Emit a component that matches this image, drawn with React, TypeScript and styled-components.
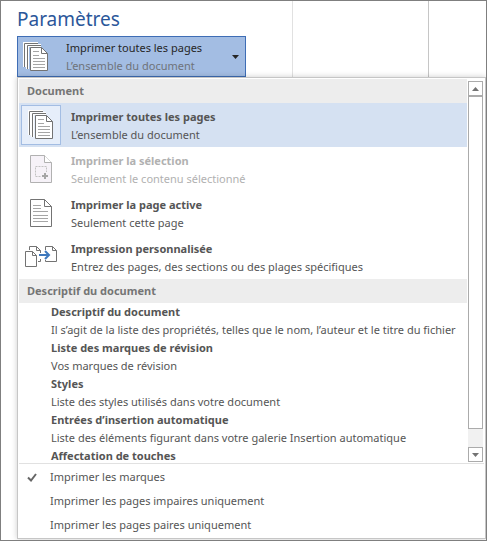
import React, { useState } from 'react';
import styled, { createGlobalStyle } from 'styled-components';

const GlobalStyle = createGlobalStyle`
  *, *::before, *::after { box-sizing: border-box; }
  body {
    margin: 0;
    background: #fff;
    font-family: "Noto Sans", "Open Sans", sans-serif;
    font-size: 11px;
    line-height: 18px;
    color: #555;
  }
  button { font: inherit; color: inherit; text-align: left; cursor: pointer; }
`;

const Frame = styled.main`
  border: 1px solid #7f7f7f;
  padding-bottom: 1px;
  overflow: hidden;
`;

const TopArea = styled.div`
  display: grid;
  grid-template-columns: 292px 136px 1fr;
`;

const SettingsPane = styled.section`
  padding: 5px 0 0 16px;
  border-right: 1px solid #e1e1e1;
`;

const PreviewPane = styled.div`
  border-right: 1px solid #c6c6c6;
`;

const Title = styled.h1`
  margin: 0;
  color: #2b579a;
  font-size: 19px;
  font-weight: 400;
  line-height: 26px;
  padding-bottom: 4px;
`;

const Picker = styled.button`
  display: flex;
  align-items: center;
  width: 229px;
  height: 41px;
  padding: 0 6px 0 5px;
  border: 1px solid #3e6db5;
  background: #a3bde3;
  color: #262626;
`;

const PickerText = styled.span`
  display: grid;
  flex: 1;
  padding-left: 17px;
`;

const PickerHint = styled.span`
  color: #6f737a;
`;

const Menu = styled.div`
  margin-left: 16px;
  border: 1px solid #c6c6c6;
  background: #fff;
  box-shadow: 0 0 6px rgba(0, 0, 0, 0.2);
  padding: 1px;
  position: relative;
`;

const ScrollRow = styled.div`
  display: flex;
  border-bottom: 1px solid #e1e1e1;
`;

const List = styled.div`
  flex: 1;
  min-width: 0;
  max-height: 384px;
  overflow: hidden;
`;

const GroupHeading = styled.h2`
  margin: 0;
  padding: 3px 8px;
  background: #ededed;
  color: #757575;
  font-size: 11px;
  line-height: 18px;
  font-weight: 700;
`;

const Option = styled.button<{ $selected?: boolean }>`
  display: flex;
  align-items: center;
  width: 100%;
  height: 44px;
  padding: 0 2px;
  border: 0;
  background: ${(p) => (p.$selected ? '#d5e1f2' : 'transparent')};
  &:disabled { color: #b1b1b1; cursor: default; }
`;

const IconBox = styled.span<{ $selected?: boolean }>`
  display: grid;
  place-items: center;
  width: 40px;
  height: 40px;
  border: 1px solid ${(p) => (p.$selected ? '#a3bde3' : 'transparent')};
  background: ${(p) => (p.$selected ? '#e6eefa' : 'transparent')};
`;

const OptionText = styled.span`
  display: grid;
  padding: 1px 0 0 10px;
  white-space: nowrap;
`;

const Detail = styled.button`
  display: grid;
  width: 100%;
  padding: 0 0 0 32px;
  border: 0;
  background: transparent;
  white-space: nowrap;
`;

const ScrollBar = styled.div`
  display: flex;
  flex-direction: column;
  width: 15px;
  margin: 2px 1px 1px;
  background: #f1f1f1;
`;

const ScrollButton = styled.button`
  display: grid;
  place-items: center;
  height: 15px;
  padding: 0;
  border: 1px solid #ababab;
  background: #fff;
`;

const Thumb = styled.div`
  flex: 0 0 333px;
  border: 1px solid #ababab;
  background: #fff;
`;

const Track = styled.div`
  flex: 1;
`;

const Toggles = styled.div`
  padding-top: 1px;
`;

const Toggle = styled.label`
  display: flex;
  align-items: center;
  height: 24px;
`;

const ToggleBox = styled.input`
  appearance: none;
  width: 0;
  height: 0;
  margin: 0;
  & + svg { visibility: hidden; }
  &:checked + svg { visibility: visible; }
`;

const CheckMark = styled.svg`
  margin: 0 13px 0 8px;
`;

const StackIcon = () => (
  <svg width="26" height="30" viewBox="0 0 26 30" fill="none" aria-hidden="true">
    <path d="M1.500 25V1.500H15M4.500 27V3.500H18" stroke="#fff" strokeWidth="3" />
    <path d="M1.500 25V1.500H15M4.500 27V3.500H18" stroke="#737373" />
    <path d="M7.500 5.500H18.500L24.500 11.500V28.500H7.500Z" fill="#fff" stroke="#737373" />
    <path d="M18.500 5.500V11.500H24.500" stroke="#737373" />
    <path d="M10 9.500H16M10 13.500H16M10 16.500H22M10 19.500H22M10 22.500H22M10 25.500H22" stroke="#a6a6a6" />
  </svg>
);

const SelectionIcon = () => (
  <svg width="22" height="28" viewBox="0 0 22 28" fill="none" aria-hidden="true">
    <path d="M.5.5H14.500L21.500 7.500V27.500H.5Z" fill="#f6f2f8" stroke="#b1b1b1" />
    <path d="M14.500.5V7.500H21.500" fill="#fff" stroke="#b1b1b1" />
    <path d="M5.500 11.500H16.500V21.500H5.500Z" stroke="#c2c2c2" strokeDasharray="2 1" />
    <path d="M11 17H19V25H11Z" fill="#f6f2f8" />
    <path d="M12 21H18M15 18V24" stroke="#a6a6a6" strokeWidth="2" />
  </svg>
);

const PageIcon = () => (
  <svg width="22" height="28" viewBox="0 0 22 28" fill="none" aria-hidden="true">
    <path d="M.5.5H14.500L21.500 7.500V27.500H.5Z" fill="#fff" stroke="#737373" />
    <path d="M14.500.5V7.500H21.500" stroke="#737373" />
    <path d="M3 6.500H11M3 9.500H11M3 12.500H18M3 16.500H18M3 19.500H18M3 22.500H18" stroke="#a6a6a6" />
  </svg>
);

const CustomIcon = () => (
  <svg width="32" height="22" viewBox="0 0 32 22" fill="none" aria-hidden="true">
    <path d="M4.500 4V.5H11.500L15.500 4.500V7M11.500.5V4.500H15.500M13 15.500H15.500V13" stroke="#737373" />
    <path d="M.5 5.500H7.500L11.500 9.500V20.500H.5ZM7.500 5.500V9.500H11.500" fill="#fff" stroke="#737373" />
    <path d="M20.500 4V.5H27.500L31.500 4.500V15.500H20.500V14M27.500.5V4.500H31.500" stroke="#737373" />
    <path d="M14 9H24M20 5L24 9L20 13" stroke="#3e78bd" strokeWidth="2" />
  </svg>
);

const Arrow = ({ up, color = '#737373' }: { up?: boolean; color?: string }) => (
  <svg width="7" height="4" viewBox="0 0 7 4" aria-hidden="true">
    <path d={up ? 'M0 4H7L3.500 0Z' : 'M0 0H7L3.500 4Z'} fill={color} />
  </svg>
);

const options = [
  { title: 'Imprimer toutes les pages', hint: 'L’ensemble du document', Icon: StackIcon },
  { title: 'Imprimer la sélection', hint: 'Seulement le contenu sélectionné', Icon: SelectionIcon, disabled: true },
  { title: 'Imprimer la page active', hint: 'Seulement cette page', Icon: PageIcon },
  { title: 'Impression personnalisée', hint: 'Entrez des pages, des sections ou des plages spécifiques', Icon: CustomIcon },
];

const details = [
  { title: 'Descriptif du document', hint: 'Il s’agit de la liste des propriétés, telles que le nom, l’auteur et le titre du fichier' },
  { title: 'Liste des marques de révision', hint: 'Vos marques de révision' },
  { title: 'Styles', hint: 'Liste des styles utilisés dans votre document' },
  { title: 'Entrées d’insertion automatique', hint: 'Liste des éléments figurant dans votre galerie Insertion automatique' },
  { title: 'Affectation de touches' },
];

const toggles = [
  'Imprimer les marques',
  'Imprimer les pages impaires uniquement',
  'Imprimer les pages paires uniquement',
];

export default function App() {
  const [selected, setSelected] = useState(0);
  return (
    <Frame>
      <GlobalStyle />
      <TopArea>
        <SettingsPane>
          <Title>Paramètres</Title>
          <Picker type="button" aria-haspopup="true" aria-expanded="true">
            <StackIcon />
            <PickerText>
              <span>Imprimer toutes les pages</span>
              <PickerHint>L’ensemble du document</PickerHint>
            </PickerText>
            <Arrow color="#262626" />
          </Picker>
        </SettingsPane>
        <PreviewPane />
      </TopArea>
      <Menu>
        <ScrollRow>
          <List>
            <GroupHeading>Document</GroupHeading>
            {options.map(({ title, hint, Icon, disabled }, i) => (
              <Option
                key={title}
                type="button"
                disabled={disabled}
                $selected={i === selected}
                onClick={() => setSelected(i)}
              >
                <IconBox $selected={i === selected}><Icon /></IconBox>
                <OptionText>
                  <strong>{title}</strong>
                  <span>{hint}</span>
                </OptionText>
              </Option>
            ))}
            <GroupHeading>Descriptif du document</GroupHeading>
            {details.map(({ title, hint }) => (
              <Detail key={title} type="button">
                <strong>{title}</strong>
                {hint && <span>{hint}</span>}
              </Detail>
            ))}
          </List>
          <ScrollBar>
            <ScrollButton type="button" aria-label="Défiler vers le haut"><Arrow up /></ScrollButton>
            <Thumb />
            <Track />
            <ScrollButton type="button" aria-label="Défiler vers le bas"><Arrow /></ScrollButton>
          </ScrollBar>
        </ScrollRow>
        <Toggles>
          {toggles.map((text, i) => (
            <Toggle key={text}>
              <ToggleBox type="checkbox" defaultChecked={i === 0} />
              <CheckMark width="10" height="9" viewBox="0 0 10 9" fill="none" aria-hidden="true">
                <path d="M1 4.500L4 7.500L9 1" stroke="#666" strokeWidth="2" />
              </CheckMark>
              {text}
            </Toggle>
          ))}
        </Toggles>
      </Menu>
    </Frame>
  );
}
